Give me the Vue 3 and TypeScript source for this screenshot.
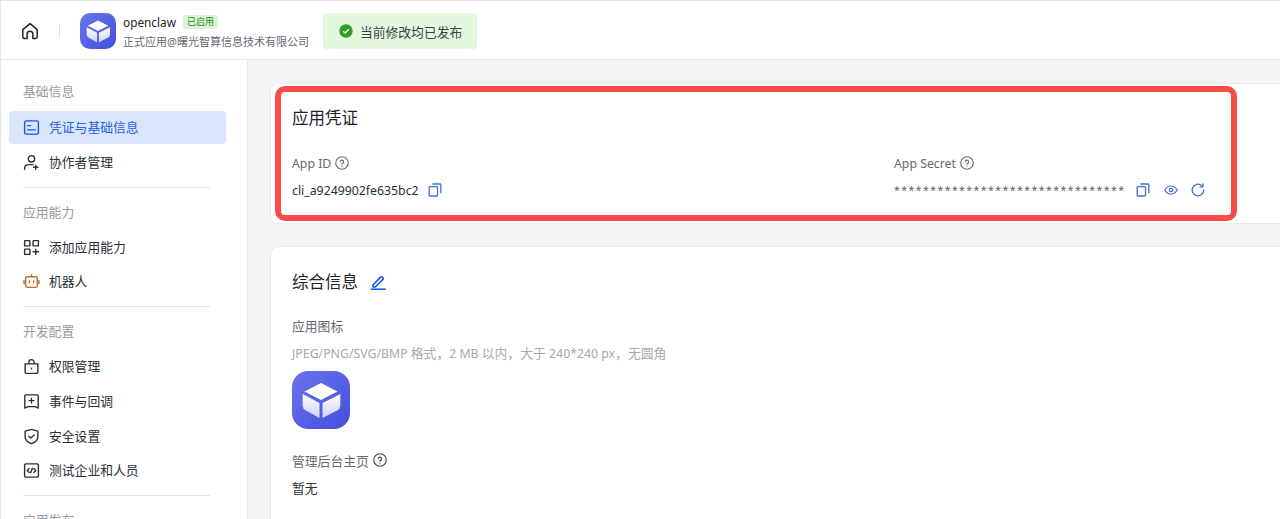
<template>
  <div class="page">
    <header class="topbar">
      <button class="home-btn" aria-label="home">
        <svg width="18" height="18" viewBox="0 0 18 18" fill="none" stroke="#1f2329" stroke-width="1.5" stroke-linejoin="round">
          <path d="M1.8 7.6 9 1.6l7.2 6v7.2a1.6 1.6 0 0 1-1.6 1.6h-2.7v-4.2a2.9 2.9 0 0 0-5.8 0v4.2H3.4a1.6 1.6 0 0 1-1.6-1.6z" />
        </svg>
      </button>
      <span class="top-sep"></span>
      <svg class="app-logo small" viewBox="0 0 58 58">
        <use href="#cube" />
      </svg>
      <div class="app-meta">
        <div class="app-name-row">
          <span class="app-name">openclaw</span>
          <span class="app-tag">已启用</span>
        </div>
        <div class="app-sub">正式应用@曙光智算信息技术有限公司</div>
      </div>
      <div class="publish-note">
        <svg width="14" height="14" viewBox="0 0 14 14">
          <circle cx="7" cy="7" r="6.7" fill="#2ea121" />
          <path d="M4.2 7.2 6.2 9l3.6-3.8" fill="none" stroke="#fff" stroke-width="1.4" />
        </svg>
        <span>当前修改均已发布</span>
      </div>
    </header>

    <div class="body">
      <aside class="sidebar">
        <section v-for="(group, gi) in menu" :key="group.title" class="menu-group">
          <hr v-if="gi > 0" class="menu-sep" />
          <div class="menu-title">{{ group.title }}</div>
          <div
            v-for="item in group.items"
            :key="item.label"
            class="menu-item"
            :class="{ active: item.active }"
          >
            <svg
              width="17"
              height="17"
              viewBox="0 0 16 16"
              fill="none"
              :stroke="item.color"
              stroke-width="1.3"
              stroke-linecap="round"
              stroke-linejoin="round"
            >
              <path :d="item.icon" />
            </svg>
            <span>{{ item.label }}</span>
          </div>
        </section>
      </aside>

      <main class="content">
        <section class="card credentials">
          <h2 class="card-title">应用凭证</h2>
          <div class="cred-grid">
            <div>
              <div class="field-label latin">
                App ID
                <svg class="help" viewBox="0 0 14 14"><use href="#help" /></svg>
              </div>
              <div class="field-value latin">
                <span>cli_a9249902fe635bc2</span>
                <svg class="act first" viewBox="0 0 14 14"><use href="#copy" /></svg>
              </div>
            </div>
            <div>
              <div class="field-label latin">
                App Secret
                <svg class="help" viewBox="0 0 14 14"><use href="#help" /></svg>
              </div>
              <div class="field-value latin">
                <span class="secret">{{ maskedSecret }}</span>
                <svg class="act" viewBox="0 0 14 14"><use href="#copy" /></svg>
                <svg class="act" viewBox="0 0 14 14"><use href="#eye" /></svg>
                <svg class="act" viewBox="0 0 14 14"><use href="#refresh" /></svg>
              </div>
            </div>
          </div>
          <div class="highlight"></div>
        </section>

        <section class="card general">
          <h2 class="card-title with-edit">
            综合信息
            <svg width="16" height="16" viewBox="0 0 16 16" fill="none" stroke="#1456f0" stroke-width="1.7" stroke-linejoin="round">
              <path d="M3 11 10.6 3.2a1.2 1.2 0 0 1 1.7 0l.6.6a1.2 1.2 0 0 1 0 1.7L5.300 13H3z" />
              <path d="M.8 15.300h15" />
            </svg>
          </h2>
          <div class="field-label plain">应用图标</div>
          <div class="hint">
            <span class="latin">JPEG/PNG/SVG/BMP </span>格式，<span class="latin">2 MB </span>以内，大于 <span class="latin">240*240 px</span>，无圆角
          </div>
          <svg class="app-logo large" viewBox="0 0 58 58">
            <use href="#cube" />
          </svg>
          <div class="field-label home-label">
            管理后台主页
            <svg class="help dark" viewBox="0 0 14 14"><use href="#help" /></svg>
          </div>
          <div class="field-value none">暂无</div>
        </section>
      </main>
    </div>

    <svg class="defs" width="0" height="0">
      <defs>
        <linearGradient id="logoBg" x1="0" y1="0" x2="1" y2="1">
          <stop offset="0" stop-color="#6a74ee" />
          <stop offset="1" stop-color="#444fdc" />
        </linearGradient>
        <linearGradient id="faceL" x1="0" y1="0" x2="0" y2="1">
          <stop offset="0" stop-color="#ffffff" />
          <stop offset="1" stop-color="#cdd1f8" />
        </linearGradient>
        <g id="cube">
          <rect width="58" height="58" rx="16" fill="url(#logoBg)" />
          <path d="M29 12 45.500 20.500 29 29 12.500 20.500z" fill="#fff" />
          <path d="M10.700 23 27.500 32V47L13.500 39.300A5 5 0 0 1 10.700 35z" fill="url(#faceL)" />
          <path d="M48.300 23 30.500 32V47L45.500 39.300A5 5 0 0 0 48.300 35z" fill="url(#faceL)" />
        </g>
        <g id="help" fill="none" stroke="currentColor" stroke-width="1.100" stroke-linecap="round">
          <circle cx="7" cy="7" r="6.300" />
          <path d="M5.300 5.600A1.700 1.700 0 1 1 7 7.500v.8" />
          <path d="M7 10.100v.1" />
        </g>
        <g id="copy" fill="none" stroke="#3f6fd0" stroke-width="1.300" stroke-linejoin="round">
          <rect x="1.200" y="3.600" width="8.300" height="9.400" rx=".8" />
          <path d="M4.400 1h7.600a.8.8 0 0 1 .8.8v8.400" />
        </g>
        <g id="eye" fill="none" stroke="#3f6fd0" stroke-width="1.200">
          <path d="M.8 7C2.300 4.300 4.500 3 7 3s4.700 1.300 6.200 4C11.700 9.700 9.500 11 7 11S2.300 9.700.8 7z" />
          <circle cx="7" cy="7" r="1.700" />
        </g>
        <g id="refresh" fill="none" stroke="#3f6fd0" stroke-width="1.300" stroke-linecap="round" stroke-linejoin="round">
          <path d="M12.800 7A5.800 5.800 0 1 1 10.700 2.500" />
          <path d="M12 .8v3h-3" />
        </g>
      </defs>
    </svg>
  </div>
</template>

<script setup lang="ts">
interface MenuItem {
  label: string;
  icon: string;
  color: string;
  active?: boolean;
}

const ink = '#2b2f36';

const menu: { title: string; items: MenuItem[] }[] = [
  {
    title: '基础信息',
    items: [
      {
        label: '凭证与基础信息',
        color: '#1456f0',
        active: true,
        icon: 'M3 1.800h10A1.500 1.500 0 0 1 14.500 3.300v9.400a1.500 1.500 0 0 1-1.500 1.500H3a1.500 1.500 0 0 1-1.500-1.500V3.300A1.500 1.500 0 0 1 3 1.800zM4.500 6.200h2.500M4.500 10.200h7',
      },
      {
        label: '协作者管理',
        color: ink,
        icon: 'M8 1.500a3 3 0 1 1 0 6 3 3 0 0 1 0-6zM1.500 14.500v-1.200c0-2 1.800-3.300 4-3.300h4M12 10.500v4M10 12.500h4',
      },
    ],
  },
  {
    title: '应用能力',
    items: [
      {
        label: '添加应用能力',
        color: ink,
        icon: 'M2 1.500h4a.5.500 0 0 1 .5.500v4a.5.500 0 0 1-.5.500H2a.5.500 0 0 1-.5-.5V2a.5.500 0 0 1 .5-.5zM10 1.500h4a.5.500 0 0 1 .5.500v4a.5.500 0 0 1-.5.500h-4a.5.500 0 0 1-.5-.5V2a.5.500 0 0 1 .5-.5zM2 9.500h4a.5.500 0 0 1 .5.500v4a.5.500 0 0 1-.5.500H2a.5.500 0 0 1-.5-.5v-4a.5.500 0 0 1 .5-.5zM12 9.500v5M9.500 12h5',
      },
      {
        label: '机器人',
        color: '#b7702a',
        icon: 'M4 3.500h8A1.500 1.500 0 0 1 13.500 5v7A1.500 1.500 0 0 1 12 13.500H4A1.500 1.500 0 0 1 2.500 12V5A1.500 1.500 0 0 1 4 3.500zM8 3.500V1.500M1 7v3M15 7v3M6 7.500v1.500M10 7.500v1.500',
      },
    ],
  },
  {
    title: '开发配置',
    items: [
      {
        label: '权限管理',
        color: ink,
        icon: 'M2 5.500h12v8a1 1 0 0 1-1 1H3a1 1 0 0 1-1-1zM5.500 5.500V4a2.500 2.500 0 0 1 5 0v1.500M8 9.500v.6',
      },
      {
        label: '事件与回调',
        color: ink,
        icon: 'M2.500 1.800h11a.8.8 0 0 1 .8.8v11.600l-3-1.400H4.700l-3 1.400V2.600a.8.8 0 0 1 .8-.8zM8 5v4.500M5.800 7.200h4.400',
      },
      {
        label: '安全设置',
        color: ink,
        icon: 'M8 1.300 14 3v5.500c0 3-2.500 5-6 6.300-3.500-1.300-6-3.300-6-6.300V3zM5.500 7.800 7.400 9.500l3.100-3',
      },
      {
        label: '测试企业和人员',
        color: ink,
        icon: 'M2.500 1.800h11a1 1 0 0 1 1 1v10.400a1 1 0 0 1-1 1h-11a1 1 0 0 1-1-1V2.800a1 1 0 0 1 1-1zM5.800 6.200 4 8l1.800 1.800M10.200 6.200 12 8l-1.800 1.800M8.800 6 7.200 10',
      },
    ],
  },
  { title: '应用发布', items: [] },
];

const maskedSecret = '*'.repeat(32);
</script>

<style>
html,
body {
  margin: 0;
  height: 100%;
  overflow: hidden;
  background: #f3f4f6;
}
</style>

<style scoped>
.page {
  width: 1280px;
  height: 519px;
  overflow: hidden;
  display: flex;
  flex-direction: column;
  box-sizing: border-box;
  border-top: 1px solid #e4e5e7;
  border-left: 1px solid #e4e5e7;
  font-family: "Noto Sans", "Noto Sans CJK SC", sans-serif;
  font-size: 12.8px;
  color: #2b2f36;
}

.latin {
  font-size: 12.3px;
}

.defs {
  position: absolute;
}

.topbar {
  flex: none;
  height: 59px;
  box-sizing: border-box;
  display: flex;
  align-items: center;
  padding-left: 20px;
  padding-top: 2px;
  background: #fff;
  border-bottom: 1px solid #e4e5e7;
}

.home-btn {
  display: flex;
  padding: 0;
  border: 0;
  background: none;
}

.top-sep {
  width: 1px;
  height: 14px;
  margin: 0 20px;
  background: #e4e5e7;
}

.app-logo.small {
  width: 36px;
  height: 36px;
}

.app-meta {
  margin-left: 7px;
}

.app-name-row {
  display: flex;
  align-items: center;
  gap: 7px;
  height: 20px;
}

.app-name {
  font-size: 11.800px;
  color: #1f2329;
}

.app-tag {
  padding: 0 4px;
  height: 14px;
  line-height: 14px;
  font-size: 9px;
  color: #2a8a22;
  background: #d9f5d6;
  border-radius: 3px;
}

.app-sub {
  margin-top: 1px;
  font-size: 11px;
  line-height: 17px;
  color: #646a73;
  white-space: nowrap;
}

.publish-note {
  display: flex;
  align-items: center;
  gap: 7px;
  height: 36px;
  margin-left: 14px;
  padding: 0 15px 0 16px;
  background: #e4f8df;
  border-radius: 4px;
  color: #3b4048;
}

.body {
  flex: 1;
  display: flex;
  min-height: 0;
}

.sidebar {
  flex: none;
  width: 247px;
  box-sizing: border-box;
  padding: 21px 21px 0 8px;
  background: #fff;
  border-right: 1px solid #e9eaec;
}

.menu-title {
  height: 22px;
  line-height: 20px;
  padding-left: 14px;
  margin-bottom: 7px;
  color: #969ba3;
}

.menu-group:first-child .menu-title {
  margin-bottom: 8px;
}

.menu-item {
  display: flex;
  align-items: center;
  gap: 9px;
  height: 33px;
  margin-bottom: 1.700px;
  padding-left: 14px;
  border-radius: 4px;
  color: #2b2f36;
}

.menu-item span {
  margin-top: -2px;
}

.menu-item.active {
  background: #d9e5fc;
  color: #2b62e0;
}

.menu-sep {
  height: 1px;
  margin: 8px 16px 14px 14px;
  border: 0;
  background: #e4e5e7;
}

.content {
  flex: 1;
  min-width: 0;
  padding: 23px 0 0 22px;
}

.card {
  box-sizing: border-box;
  background: #fff;
  border: 1px solid #e9eaec;
  border-right: 0;
  border-radius: 8px 0 0 8px;
  padding-left: 21px;
}

.credentials {
  position: relative;
  height: 141px;
  padding-top: 22px;
}

.highlight {
  position: absolute;
  left: 4px;
  top: 2px;
  width: 962px;
  height: 135px;
  box-sizing: border-box;
  border: 6px solid #f94c48;
  border-radius: 10px;
  pointer-events: none;
}

.card-title {
  margin: 0;
  font-size: 16.500px;
  font-weight: 400;
  line-height: 24px;
  color: #1f2329;
}

.cred-grid {
  display: grid;
  grid-template-columns: 602px 1fr;
  margin-top: 23px;
}

.field-label {
  display: flex;
  align-items: center;
  gap: 4px;
  height: 20px;
  color: #646a73;
}

.help {
  width: 14px;
  height: 14px;
  color: #646a73;
}

.help.dark {
  color: #3b4048;
}

.field-value {
  display: flex;
  align-items: center;
  height: 20px;
  margin-top: 7px;
  color: #2b2f36;
  white-space: nowrap;
}

.secret {
  width: 231px;
  font-size: 10.500px;
  color: #5c6068;
  letter-spacing: 1.450px;
}

.act {
  flex: none;
  width: 14px;
  height: 14px;
  margin-left: 11px;
  margin-right: 2.500px;
}

.act.first {
  margin-left: 9px;
}

.general {
  height: 300px;
  margin-top: 22px;
  padding-top: 23px;
}

.with-edit {
  display: flex;
  align-items: center;
  gap: 12px;
}

.plain {
  margin-top: 21px;
}

.hint {
  margin-top: 8px;
  line-height: 20px;
  color: #a4a8af;
  white-space: nowrap;
}

.app-logo.large {
  display: block;
  width: 58px;
  height: 58px;
  margin-top: 7px;
}

.home-label {
  margin-top: 21px;
}

.none {
  margin-top: 7px;
}
</style>
